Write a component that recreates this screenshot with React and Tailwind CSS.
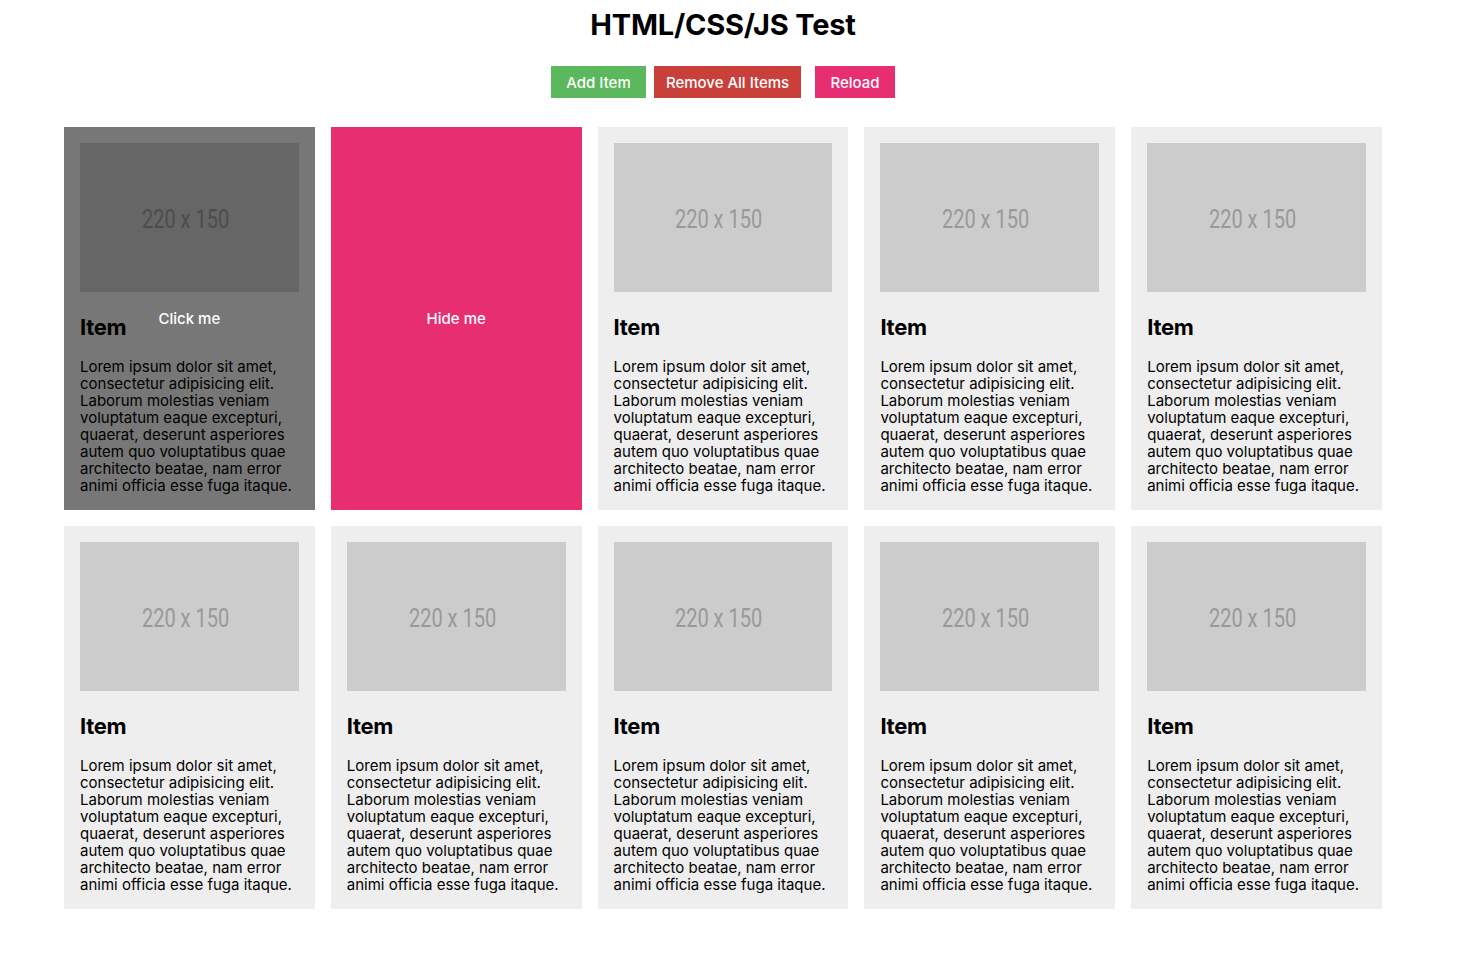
export default function App() {
  const lorem =
    "Lorem ipsum dolor sit amet, consectetur adipisicing elit. Laborum molestias veniam voluptatum eaque excepturi, quaerat, deserunt asperiores autem quo voluptatibus quae architecto beatae, nam error animi officia esse fuga itaque.";

  const items = Array.from({ length: 10 }, (_, i) => i);

  return (
    <div className="w-[1446px] bg-white font-['Inter','Noto_Sans',sans-serif] text-black">
      {/* Title */}
      <h1 className="pt-[7px] text-center text-[29px] font-bold leading-[36px] tracking-[-0.2px]">
        HTML/CSS/JS Test
      </h1>

      {/* Controls */}
      <div className="mt-[23px] flex justify-center">
        <button className="h-8 w-[95px] bg-[#5cb85c] pt-[2px] text-[15px] font-medium text-white">
          Add Item
        </button>
        <button className="ml-2 h-8 w-[147px] bg-[#c9403b] pt-[2px] text-[15px] font-medium text-white">
          Remove All Items
        </button>
        <button className="ml-[14px] h-8 w-20 bg-[#e62e71] pt-[2px] text-[15px] font-medium text-white">
          Reload
        </button>
      </div>

      {/* Items */}
      <div className="mx-auto mt-[29px] grid w-[1318px] grid-cols-5 gap-4">
        {items.map((i) => (
          <div key={i} className="relative bg-[#eeeeee] p-4">
            <div className="flex h-[149px] items-center justify-center bg-[#cccccc] pt-1">
              <span className="-ml-2 inline-block scale-x-[0.8] font-['Roboto',sans-serif] text-[25px] text-[#999999]">
                220 x 150
              </span>
            </div>
            <h2 className="mt-[22px] text-[22px] font-bold leading-[26px] tracking-[-0.3px]">Item</h2>
            <p className="mt-[18px] text-[15px] leading-[17px]">{lorem}</p>

            {i === 0 && (
              <div className="absolute inset-0 flex items-center justify-center bg-black/50">
                <span className="pt-px text-[15px] font-medium text-white">Click me</span>
              </div>
            )}
            {i === 1 && (
              <div className="absolute inset-0 flex items-center justify-center bg-[#e62e71]">
                <span className="pt-px text-[15px] font-medium text-white">Hide me</span>
              </div>
            )}
          </div>
        ))}
      </div>
    </div>
  );
}
